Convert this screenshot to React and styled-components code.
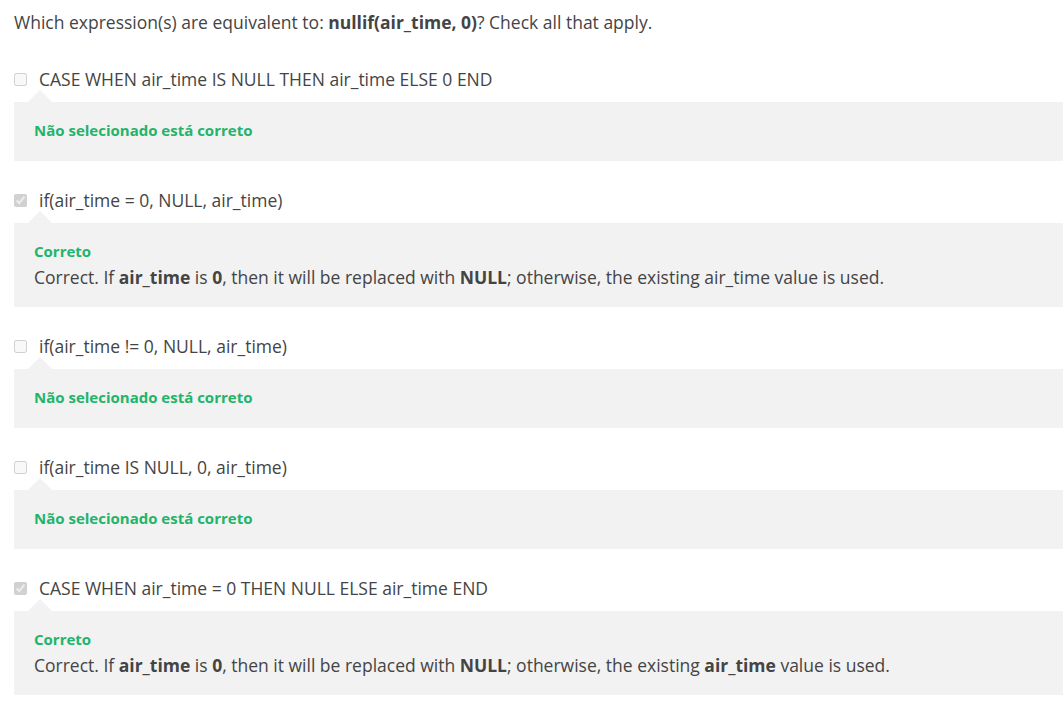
import styled, { createGlobalStyle } from "styled-components";

const GlobalStyle = createGlobalStyle`
  body {
    margin: 0;
    background: #ffffff;
    font-family: "Open Sans", "Liberation Sans", sans-serif;
    color: #444444;
  }
`;

const options = [
  {
    label: "CASE WHEN air_time IS NULL THEN air_time ELSE 0 END",
    checked: false,
  },
  {
    label: "if(air_time = 0, NULL, air_time)",
    checked: true,
    body: (
      <>
        Correct. If <b>air_time</b> is <b>0</b>, then it will be replaced with{" "}
        <b>NULL</b>; otherwise, the existing air_time value is used.
      </>
    ),
  },
  { label: "if(air_time != 0, NULL, air_time)", checked: false },
  { label: "if(air_time IS NULL, 0, air_time)", checked: false },
  {
    label: "CASE WHEN air_time = 0 THEN NULL ELSE air_time END",
    checked: true,
    body: (
      <>
        Correct. If <b>air_time</b> is <b>0</b>, then it will be replaced with{" "}
        <b>NULL</b>; otherwise, the existing <b>air_time</b> value is used.
      </>
    ),
  },
];

const Page = styled.div`
  padding: 10px 0 0 14px;
`;

const Prompt = styled.p`
  margin: 0 0 33px;
  font-size: 17.5px;
  line-height: 24px;

  b {
    font-weight: 700;
  }
`;

const OptionList = styled.div`
  display: flex;
  flex-direction: column;
  gap: 27px;
`;

const Option = styled.div`
  display: flex;
  flex-direction: column;
  gap: 11px;
`;

const OptionRow = styled.label`
  display: flex;
  align-items: center;
  gap: 12px;
  height: 24px;
  font-size: 17.5px;

  input {
    margin: 0;
    width: 13px;
    height: 13px;
  }
`;

const Feedback = styled.div`
  position: relative;
  background: #f2f2f2;
  padding: ${(p) => (p.$long ? "18px 20px 19px" : "18px 20px 21px")};

  &::before {
    content: "";
    position: absolute;
    left: 14px;
    top: -12px;
    border-left: 12px solid transparent;
    border-right: 12px solid transparent;
    border-bottom: 12px solid #f2f2f2;
  }
`;

const Verdict = styled.div`
  color: #22b46a;
  font-size: 15px;
  font-weight: 700;
  line-height: 20px;
`;

const Explanation = styled.div`
  margin-top: 5px;
  font-size: 17.5px;
  line-height: 22px;

  b {
    font-weight: 700;
  }
`;

export default function App() {
  return (
    <>
      <GlobalStyle />
      <Page>
        <Prompt>
          Which expression(s) are equivalent to: <b>nullif(air_time, 0)</b>? Check
          all that apply.
        </Prompt>
        <OptionList>
          {options.map((o) => (
            <Option key={o.label}>
              <OptionRow>
                <input type="checkbox" disabled defaultChecked={o.checked} />
                {o.label}
              </OptionRow>
              <Feedback $long={!!o.body}>
                <Verdict>{o.body ? "Correto" : "Não selecionado está correto"}</Verdict>
                {o.body && <Explanation>{o.body}</Explanation>}
              </Feedback>
            </Option>
          ))}
        </OptionList>
      </Page>
    </>
  );
}
